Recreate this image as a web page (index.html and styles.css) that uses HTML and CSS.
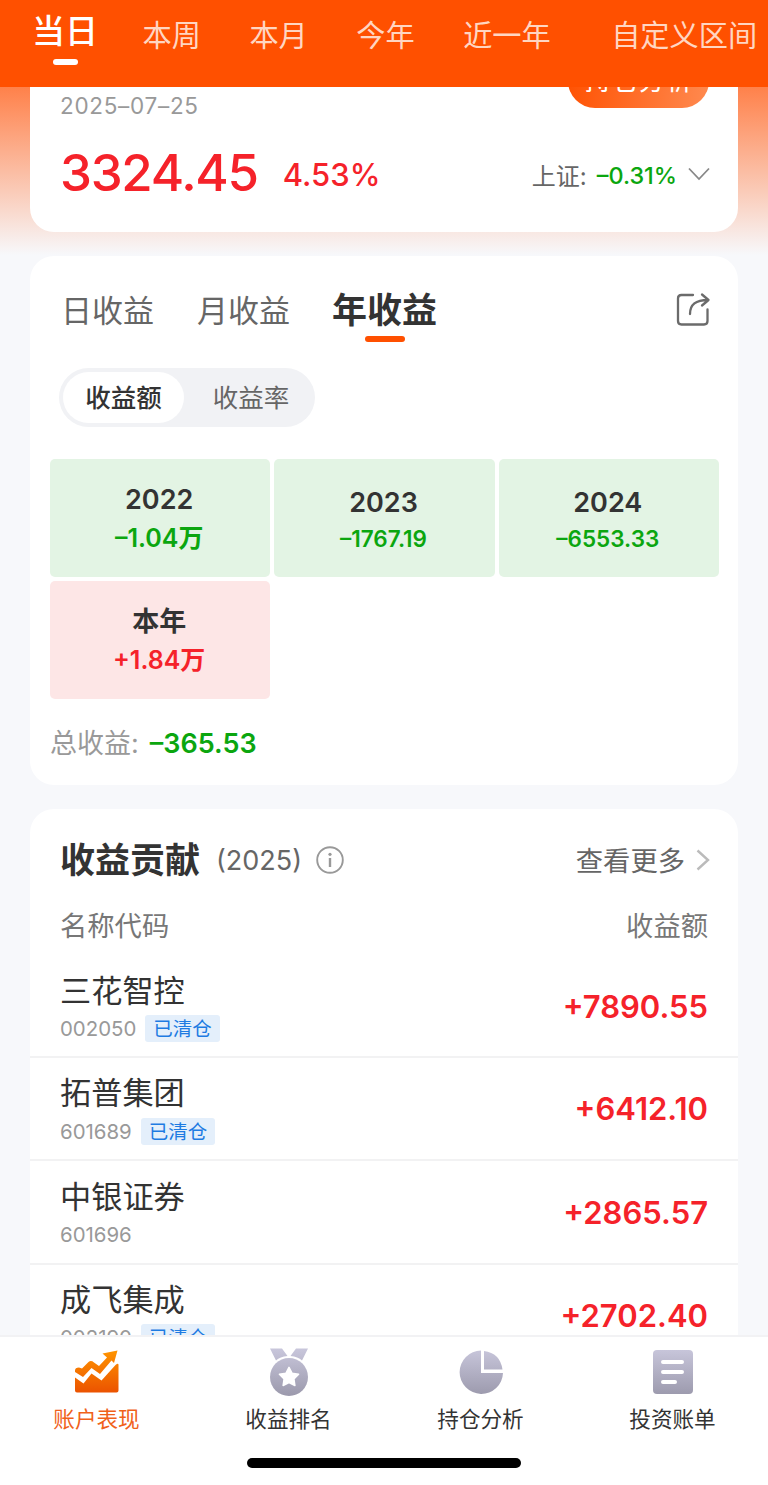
FILE: index.html
```html
<!DOCTYPE html>
<html lang="zh-CN">
<head>
    <meta charset="UTF-8">
    <meta name="viewport" content="width=device-width, initial-scale=1.0">
    <title>账户表现</title>
    <link rel="stylesheet" href="styles.css">
</head>
<body>
    <div class="app">
        <div class="period-bar">
            <a class="period active">当日</a>
            <a class="period">本周</a>
            <a class="period">本月</a>
            <a class="period">今年</a>
            <a class="period">近一年</a>
            <a class="period custom">自定义区间</a>
        </div>

        <div class="content">
            <div class="card summary">
                <div class="summary-top">
                    <span class="date">2025–07–25</span>
                    <a class="analysis-btn">持仓分析</a>
                </div>
                <div class="summary-main">
                    <span class="amount">3324.45</span>
                    <span class="percent">4.53%</span>
                    <span class="index-name">上证:</span>
                    <span class="index-value">–0.31%</span>
                    <svg class="arrow-down" width="22" height="14" viewBox="0 0 22 14"><path d="M1 1.5 11 12 21 1.5" fill="none" stroke="#888" stroke-width="1.8"/></svg>
                </div>
            </div>

            <div class="card income">
                <div class="income-tabs">
                    <a class="income-tab">日收益</a>
                    <a class="income-tab">月收益</a>
                    <a class="income-tab active">年收益</a>
                    <svg class="share" width="36" height="36" viewBox="0 0 36 36" fill="none" stroke="#6b6b6b" stroke-width="2.3" stroke-linecap="round" stroke-linejoin="round">
                        <path d="M18 3H6.500Q3 3 3 6.500V29Q3 32.500 6.500 32.500H29Q32.500 32.500 32.500 29V17.500"/>
                        <path d="M15 22C15 12 21 8 33 8M27 2.500 33.500 8 27 13.500"/>
                    </svg>
                </div>
                <div class="switch">
                    <a class="switch-item active">收益额</a>
                    <a class="switch-item">收益率</a>
                </div>
                <div class="year-grid">
                    <div class="year down wan">
                        <b>2022</b>
                        <span>–1.04万</span>
                    </div>
                    <div class="year down">
                        <b>2023</b>
                        <span>–1767.19</span>
                    </div>
                    <div class="year down">
                        <b>2024</b>
                        <span>–6553.33</span>
                    </div>
                    <div class="year up wan">
                        <b>本年</b>
                        <span>+1.84万</span>
                    </div>
                </div>
                <div class="total">
                    <span>总收益:</span>
                    <b>–365.53</b>
                </div>
            </div>

            <div class="card contribution">
                <div class="contribution-head">
                    <h2>收益贡献</h2>
                    <span class="head-year">(2025)</span>
                    <svg class="info" width="28" height="28" viewBox="0 0 28 28"><circle cx="14" cy="14" r="12.800" fill="none" stroke="#999" stroke-width="1.900"/><circle cx="14" cy="8.300" r="1.600" fill="#999"/><path d="M14 12V21" stroke="#999" stroke-width="2.400"/></svg>
                    <a class="more">查看更多</a>
                    <svg width="14" height="22" viewBox="0 0 14 22"><path d="M1.500 1.500 12 11 1.500 20.500" fill="none" stroke="#bbb" stroke-width="2.400"/></svg>
                </div>
                <div class="columns">
                    <span>名称代码</span>
                    <span>收益额</span>
                </div>
                <div class="stock">
                    <div>
                        <div class="stock-name">三花智控</div>
                        <div class="stock-code">002050<span class="tag">已清仓</span></div>
                    </div>
                    <div class="stock-income">+7890.55</div>
                </div>
                <div class="stock">
                    <div>
                        <div class="stock-name">拓普集团</div>
                        <div class="stock-code">601689<span class="tag">已清仓</span></div>
                    </div>
                    <div class="stock-income">+6412.10</div>
                </div>
                <div class="stock">
                    <div>
                        <div class="stock-name">中银证券</div>
                        <div class="stock-code">601696</div>
                    </div>
                    <div class="stock-income">+2865.57</div>
                </div>
                <div class="stock">
                    <div>
                        <div class="stock-name">成飞集成</div>
                        <div class="stock-code">002190<span class="tag">已清仓</span></div>
                    </div>
                    <div class="stock-income">+2702.40</div>
                </div>
            </div>
        </div>

        <div class="tabbar">
            <div class="tabs">
                <a class="tab active">
                    <svg width="48" height="48" viewBox="0 0 48 48">
                        <defs>
                            <linearGradient id="orange" x1="0" y1="2" x2="0" y2="45" gradientUnits="userSpaceOnUse"><stop offset="0" stop-color="#ff9500"/><stop offset="1" stop-color="#eb5200"/></linearGradient>
                            <linearGradient id="gray" x1="0" y1="0" x2="0" y2="48" gradientUnits="userSpaceOnUse"><stop offset="0" stop-color="#c9c7dc"/><stop offset="1" stop-color="#9b99ac"/></linearGradient>
                        </defs>
                        <path fill="url(#orange)" d="M2 22.500Q2 19.500 6 19.500L9 20.500 15.500 14Q18 12 21 14.500L26 18 34 9.500 29.500 5.500 44.500 2.500 41 15 38.500 12.500 27 26 18.500 20 10 29 2 24Z"/>
                        <path fill="url(#orange)" d="M2 29.500 10.500 35.500 18.500 25.500 28.500 32.500 42.500 17Q45.500 14.500 45.500 17V42.500Q45.500 44.500 43.500 44.500H4Q2 44.500 2 42.500Z"/>
                    </svg>
                    <span>账户表现</span>
                </a>
                <a class="tab">
                    <svg width="48" height="48" viewBox="0 0 48 48">
                        <path fill="url(#gray)" d="M5 .5H17L22.500 8Q15 8.500 11 12.500Z"/>
                        <path fill="url(#gray)" d="M43 .5H31L25.500 8Q33 8.500 37 12.500Z"/>
                        <circle cx="24" cy="29" r="19" fill="url(#gray)"/>
                        <path fill="#fff" stroke="#fff" stroke-width="1.500" stroke-linejoin="round" d="M24 19.300 27 25.200 33.600 26.200 28.900 30.900 29.900 37.500 24 34.500 18.100 37.500 19.100 30.900 14.400 26.200 21 25.200Z"/>
                    </svg>
                    <span>收益排名</span>
                </a>
                <a class="tab">
                    <svg width="48" height="48" viewBox="0 0 48 48">
                        <path fill="url(#gray)" d="M24 2.500A21.700 21.700 0 1 0 46 25H24Z"/>
                        <path fill="url(#gray)" d="M27 3Q43 5 45.500 21.500H27Z"/>
                    </svg>
                    <span>持仓分析</span>
                </a>
                <a class="tab">
                    <svg width="48" height="48" viewBox="0 0 48 48">
                        <rect x="4" y="2" width="40" height="44" rx="4" fill="url(#gray)"/>
                        <path d="M14 14H33M14 24H33M14 34H26" stroke="#fff" stroke-width="4" stroke-linecap="round"/>
                    </svg>
                    <span>投资账单</span>
                </a>
            </div>
            <div class="home-line"></div>
        </div>
    </div>
</body>
</html>
```

FILE: styles.css
```css
* {
    box-sizing: border-box;
}
body {
    margin: 0;
    background: #f7f8fb;
    font-family: Inter, 'Noto Sans CJK SC', sans-serif;
    color: #333;
}
svg {
    display: block;
    flex: none;
}
.app {
    height: 1485px;
    display: flex;
    flex-direction: column;
    overflow: hidden;
}

/* period bar */
.period-bar {
    flex: none;
    height: 87px;
    background: #ff5000;
    display: flex;
    gap: 48.5px;
    padding-left: 32px;
    white-space: nowrap;
}
.period {
    font-size: 29.2px;
    line-height: 72px;
    color: #ffd6c2;
}
.period.active {
    font-size: 33px;
    line-height: 62px;
    font-weight: 500;
    color: #fff;
    margin-right: -4px;
}
.period.active::after {
    content: "";
    display: block;
    width: 25px;
    height: 6px;
    border-radius: 3px;
    background: #fff;
    margin: -3px auto 0;
}
.period.custom {
    margin-left: 12px;
}

/* scrolled content */
.content {
    flex: 1;
    min-height: 0;
    overflow: hidden;
    padding: 0 30px;
    background: linear-gradient(#ff814a, #f7f8fb) 0 0 / 100% 168px no-repeat;
}
.card {
    background: #fff;
    border-radius: 24px;
    margin-bottom: 24px;
}

.summary {
    height: 202px;
    margin-top: -57px;
    padding: 24px 28px 0 30px;
}
.summary-top {
    display: flex;
    justify-content: space-between;
    height: 64px;
    padding-right: 1px;
}
.date {
    align-self: flex-end;
    font-size: 22.5px;
    line-height: 24px;
    letter-spacing: 0.7px;
    color: #999;
}
.analysis-btn {
    width: 141px;
    height: 54px;
    border-radius: 27px;
    background: linear-gradient(100deg, #ff5000, #ff8a50);
    color: #fff;
    font-size: 27px;
    line-height: 54px;
    text-align: center;
}
.summary-main {
    display: flex;
    align-items: center;
    height: 112px;
}
.amount {
    margin-top: -4px;
    font-size: 51px;
    font-weight: 500;
    letter-spacing: -1.3px;
    color: #f5222a;
}
.percent {
    margin-left: 25px;
    font-size: 31px;
    font-weight: 500;
    color: #f5222a;
}
.index-name {
    margin-left: auto;
    font-size: 24px;
    color: #666;
}
.index-value {
    margin-top: 2px;
    margin-left: 10px;
    font-size: 23.4px;
    font-weight: 500;
    color: #0ba60f;
}
.arrow-down {
    margin-left: 11px;
}

/* income */
.income {
    height: 529px;
    padding: 22px 19px 0 20px;
}
.income-tabs {
    display: flex;
    height: 90px;
    padding: 0 8px 0 11px;
}
.income-tab {
    font-size: 31px;
    line-height: 65px;
    color: #666;
    margin-right: 43px;
}
.income-tab.active {
    font-size: 35px;
    font-weight: 700;
    color: #333;
    margin-left: -1px;
    margin-right: auto;
}
.income-tab.active::after {
    content: "";
    display: block;
    width: 40px;
    height: 6px;
    border-radius: 3px;
    background: #ff5000;
    margin: -7px auto 0;
}
.share {
    margin-top: 14px;
}
.switch {
    display: flex;
    width: 256px;
    height: 59px;
    margin-left: 9px;
    padding: 4px;
    border-radius: 30px;
    background: #f1f2f5;
}
.switch-item {
    flex: none;
    width: 121px;
    border-radius: 26px;
    font-size: 25.5px;
    line-height: 52px;
    text-align: center;
    color: #666;
}
.switch-item + .switch-item {
    width: 134px;
}
.switch-item.active {
    background: #fff;
    color: #333;
    font-weight: 500;
}
.year-grid {
    display: grid;
    grid-template-columns: repeat(3, 1fr);
    grid-auto-rows: 118px;
    gap: 4px;
    margin-top: 32px;
}
.year {
    border-radius: 5px;
    display: flex;
    flex-direction: column;
    align-items: center;
    padding: 26px 2px 0 0;
}
.year b {
    font-size: 27px;
    line-height: 36px;
    font-weight: 600;
    color: #333;
}
.year span {
    font-size: 22.5px;
    line-height: 35px;
    font-weight: 600;
}
.year.wan {
    padding-top: 23px;
}
.year.wan span {
    font-size: 25px;
    line-height: 41px;
}
.down {
    background: #e3f4e4;
    color: #0ba60f;
}
.up {
    background: #fde6e6;
    color: #f5222a;
}
.total {
    display: flex;
    gap: 11px;
    font-size: 27px;
    line-height: 36px;
    color: #999;
    margin-top: 27px;
}
.total b {
    font-weight: 600;
    color: #0ba60f;
}

/* contribution */
.contribution {
    padding-top: 27px;
}
.contribution-head {
    display: flex;
    align-items: center;
    height: 48px;
    padding: 0 28px 0 30px;
}
.contribution-head h2 {
    margin: 0;
    font-size: 35px;
    line-height: 48px;
    font-weight: 700;
}
.head-year {
    margin-left: 16px;
    font-size: 27px;
    color: #666;
}
.info {
    margin-left: 14px;
}
.more {
    margin-left: auto;
    margin-right: 11px;
    margin-top: -2px;
    font-size: 27.3px;
    color: #666;
}
.columns {
    display: flex;
    justify-content: space-between;
    padding: 0 30px;
    margin-top: 23px;
    font-size: 27.3px;
    line-height: 40px;
    color: #777;
}
.stock {
    display: flex;
    justify-content: space-between;
    align-items: center;
    height: 103.4px;
    padding: 0 30px;
    border-bottom: 2px solid #f2f2f3;
}
.columns + .stock {
    height: 111px;
    padding-top: 9px;
}
.stock-name {
    font-size: 31.2px;
    line-height: 44px;
    padding-top: 1px;
}
.stock-code {
    display: flex;
    align-items: center;
    height: 32px;
    font-size: 20.4px;
    color: #999;
}
.tag {
    height: 27px;
    margin-left: 9px;
    padding: 0 8px;
    border-radius: 3px;
    background: #e4effb;
    color: #1e7be2;
    font-size: 19.5px;
    line-height: 28px;
}
.stock-income {
    font-size: 31px;
    font-weight: 600;
    color: #f5222a;
}

/* bottom tabs */
.tabbar {
    flex: none;
    height: 150px;
    background: #fff;
    border-top: 2px solid #f2f2f4;
}
.tabs {
    display: flex;
    height: 121px;
}
.tab {
    flex: 1;
    display: flex;
    flex-direction: column;
    align-items: center;
    padding: 11px 0 0 1px;
    font-size: 21.6px;
    line-height: 47px;
    color: #333;
}
.tab.active {
    color: #f0611a;
}
.home-line {
    width: 274px;
    height: 10px;
    border-radius: 5px;
    background: #000;
    margin: 0 auto;
}
```
